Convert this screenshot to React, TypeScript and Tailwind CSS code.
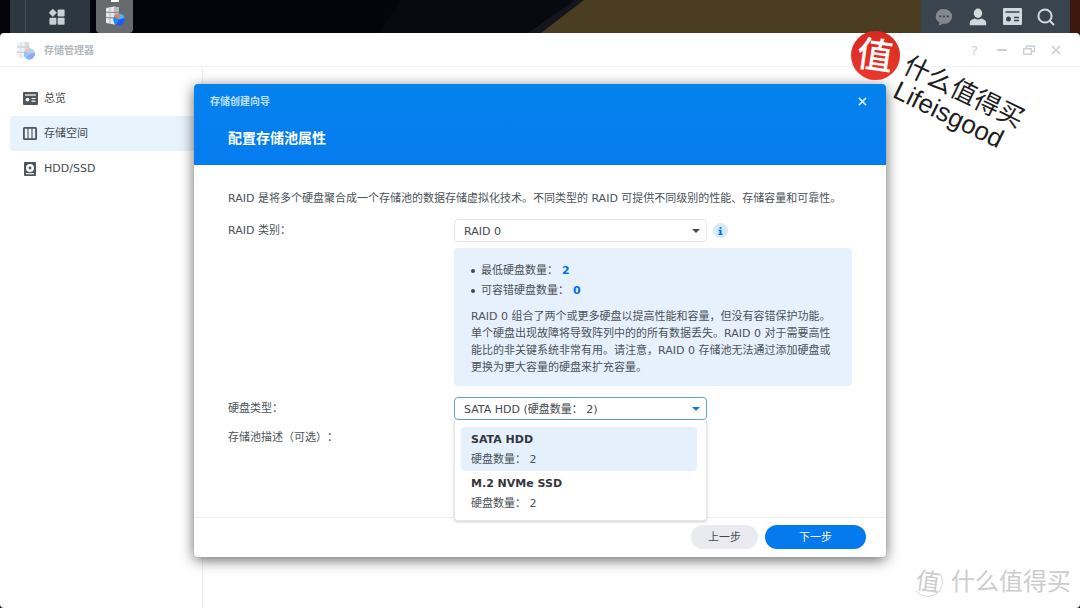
import { ReactElement, ReactNode, useState } from 'react'
import clsx from 'clsx'

interface INavItem {
  id: string
  label: string
  icon: ReactNode
}

interface IDriveType {
  id: string
  name: string
  count: number
}

const driveTypes: IDriveType[] = [
  { id: 'sata', name: 'SATA HDD', count: 2 },
  { id: 'nvme', name: 'M.2 NVMe SSD', count: 2 },
]

const StorageIcon = ({ className }: { className?: string }): ReactElement => (
  <svg viewBox="0 0 20 20" className={className} aria-hidden="true">
    <path d="M1 2l8-1.500 5 1v15.500l-5 1.500-8-1.500z" fill="#e6e8ea" />
    <path d="M9 .5l5 1v15.500l-5 1.500z" fill="#b9bdc1" />
    <path d="M1 6.200l8 .3 5-.3M1 11.600l8 .4 5-.4" fill="none" stroke="#7d8287" strokeWidth="1" />
    <path d="M5 1.500v16.500" stroke="#a5aaae" strokeWidth="0.800" />
    <circle cx="14" cy="13.600" r="5.800" fill="#1b8cff" />
    <path d="M14 13.600V7.800a5.800 5.800 0 0 1 5.600 4.200z" fill="#4fb4f5" />
    <path d="M14 13.600l-5-3a5.800 5.800 0 0 1 5-2.800z" fill="#ff7a3c" />
    <path d="M14 13.600l5.600-1.600a5.800 5.800 0 0 1-8.400 6.700z" fill="#2858e8" />
  </svg>
)

const OverviewIcon = (): ReactElement => (
  <svg viewBox="0 0 15 13" className="h-[13px] w-[15px]" aria-hidden="true">
    <rect width="15" height="13" rx="1" fill="currentColor" />
    <path d="M2 3h11" stroke="#fff" strokeWidth="1.200" />
    <circle cx="4.500" cy="7.600" r="1.900" fill="#fff" />
    <path d="M8.500 6.500h4M8.500 9.200h4" stroke="#fff" strokeWidth="1.200" />
  </svg>
)

// inverted version of OverviewIcon for the task bar
const WidgetIcon = (): ReactElement => (
  <svg viewBox="0 0 19 17" className="h-[17px] w-[19px]" aria-hidden="true">
    <rect width="19" height="17" rx="1" fill="#d3d8dc" />
    <path d="M2.500 4h14M11 9.400h5M11 12.600h5" stroke="#3a444e" strokeWidth="1.500" />
    <circle cx="5.500" cy="11" r="2.500" fill="#3a444e" />
  </svg>
)

const VolumeIcon = (): ReactElement => (
  <svg viewBox="0 0 14 13" className="h-[13px] w-[14px]" aria-hidden="true">
    <rect x="0.900" y="0.900" width="12.200" height="11.200" rx="0.600" fill="none" stroke="currentColor" strokeWidth="1.800" />
    <path d="M5 1v11M9 1v11" stroke="currentColor" strokeWidth="1.100" />
  </svg>
)

const DiskIcon = (): ReactElement => (
  <svg viewBox="0 0 12 14" className="h-[14px] w-[12px]" aria-hidden="true">
    <rect width="12" height="14" rx="1" fill="currentColor" />
    <circle cx="6" cy="6" r="4" fill="#fff" />
    <circle cx="6" cy="6" r="1.400" fill="currentColor" />
    <path d="M2 11.700h8" stroke="#fff" strokeWidth="1.100" />
  </svg>
)

const CloseIcon = ({ className }: { className?: string }): ReactElement => (
  <svg viewBox="0 0 10 10" className={className} aria-hidden="true">
    <path d="M1 1l8 8M9 1L1 9" fill="none" stroke="currentColor" strokeWidth="1.700" />
  </svg>
)

const navItems: INavItem[] = [
  { id: 'overview', label: '总览', icon: <OverviewIcon /> },
  { id: 'storage', label: '存储空间', icon: <VolumeIcon /> },
  { id: 'hdd', label: 'HDD/SSD', icon: <DiskIcon /> },
]

const TaskBar = (): ReactElement => (
  <header className="relative flex h-[33px] items-stretch bg-[#04050a]">
    <svg
      viewBox="0 0 1080 33"
      preserveAspectRatio="none"
      className="absolute inset-0 h-full w-full"
      aria-hidden="true"
    >
      <path d="M400 0h184l-42 33H380z" fill="#08090e" />
      <path d="M575 0h12l-42 33h-17z" fill="#15161d" />
      <path d="M584 0h496v33H541z" fill="#4a3d22" />
      <path d="M1068 0h12v33h-12z" fill="#3c180d" />
    </svg>
    <div className="relative flex w-full items-stretch px-[10px]">
      <button className="flex w-20 items-stretch bg-[#2c3740]" aria-label="主菜单">
        <span className="w-4 border-r border-[#46515a]" />
        <span className="flex grow items-center justify-center pr-0.5">
          <svg viewBox="0 0 16 16" className="h-4 w-4" fill="#c9d0d5">
            <path d="M3.800 0l3.800 3.800-3.800 3.800L0 3.800z" stroke="#c9d0d5" strokeWidth="0.600" />
            <rect x="8.600" y="0.400" width="7" height="7" rx="1" />
            <rect x="0.400" y="8.800" width="7" height="7" rx="1" />
            <rect x="8.600" y="8.800" width="7" height="7" rx="1" />
          </svg>
        </span>
      </button>
      <button
        className="ml-1.5 flex w-[37px] flex-col items-center rounded-b-sm bg-[#676b6e]"
        aria-label="存储管理器"
      >
        <span className="h-0.5 w-2 bg-white" />
        <StorageIcon className="mt-1 h-5 w-5" />
      </button>
      <div className="ml-auto flex items-center bg-[#3a444e] pr-[7px] pl-1.5">
        <button className="flex w-[34px] justify-center" aria-label="聊天">
          <svg viewBox="0 0 18 18" className="h-[18px] w-[18px]">
            <path d="M9 1a8.200 7.400 0 0 1 0 14.800c-.6 0-1 0-1.600-.1-1 1-2.400 1.500-3.800 1.500.6-.8.8-1.600.7-2.600A7.400 7.400 0 0 1 9 1z" fill="#82888e" />
            <path d="M4.200 8.400h2M8 8.400h2M11.800 8.400h2" stroke="#3a444e" strokeWidth="1.800" />
          </svg>
        </button>
        <button className="flex w-[34px] justify-center" aria-label="用户">
          <svg viewBox="0 0 18 18" className="h-[18px] w-[18px]" fill="#d3d8dc">
            <ellipse cx="9" cy="5.200" rx="4.200" ry="4.700" />
            <path d="M.8 17.200v-2.400c0-2 2.200-3.600 5-4.200 2 1.200 4.400 1.200 6.400 0 2.800.6 5 2.200 5 4.200v2.400z" />
          </svg>
        </button>
        <button className="flex w-[34px] justify-center" aria-label="小工具">
          <WidgetIcon />
        </button>
        <button className="flex w-[34px] justify-center" aria-label="搜索">
          <svg viewBox="0 0 18 18" className="h-[18px] w-[18px]" fill="none" stroke="#d3d8dc" strokeWidth="2">
            <circle cx="8" cy="8" r="6.600" />
            <path d="M12.700 12.700l4.300 4.300" />
          </svg>
        </button>
      </div>
    </div>
  </header>
)

const WindowTitle = (): ReactElement => (
  <div className="flex h-[34px] items-center border-b border-[#eff1f5] pt-px pr-[11px] pl-4">
    <StorageIcon className="h-[19px] w-[19px] opacity-50" />
    <h1 className="ml-[9px] text-[10px] font-bold text-[#b4b8bb]">存储管理器</h1>
    <div className="ml-auto flex items-center text-[#cccfd2]">
      <button className="flex w-[27px] justify-center text-[13px]" aria-label="帮助">
        ?
      </button>
      <button className="flex w-[27px] justify-center" aria-label="最小化">
        <span className="h-0.5 w-[10px] bg-current" />
      </button>
      <button className="flex w-[27px] justify-center" aria-label="还原">
        <svg viewBox="0 0 12 10" className="h-[10px] w-3" fill="none" stroke="currentColor">
          <path d="M3.500 3V1h7.800v5.500H9" strokeWidth="1.400" />
          <rect x="0.700" y="3.700" width="7.600" height="5.500" strokeWidth="1.400" />
        </svg>
      </button>
      <button className="flex w-[27px] justify-center" aria-label="关闭">
        <CloseIcon className="h-[10px] w-[10px]" />
      </button>
    </div>
  </div>
)

const Sidebar = (): ReactElement => {
  const [active, setActive] = useState('storage')

  return (
    <nav className="w-[203px] shrink-0 border-r border-[#eceef1] pt-[14px] pl-[10px]">
      <ul>
        {navItems.map((item) => (
          <li key={item.id}>
            <button
              onClick={() => setActive(item.id)}
              className={clsx(
                'flex h-[35px] w-full items-center gap-1.5 rounded-l pl-3 text-[#44494d]',
                item.id === active && 'bg-[#e6f2fc]'
              )}
            >
              <span className="flex w-4 justify-center text-[#50555a]">
                {item.icon}
              </span>
              {item.label}
            </button>
          </li>
        ))}
      </ul>
    </nav>
  )
}

const Caret = (): ReactElement => (
  <svg viewBox="0 0 8 4" className="pointer-events-none absolute top-[10px] right-[7px] h-1 w-2" aria-hidden="true">
    <path d="M0 0h8L4 4z" fill="currentColor" />
  </svg>
)

const RaidInfo = (): ReactElement => (
  <div className="col-start-2 mb-[5px] rounded-sm bg-[#e7f1fe] px-[17px] pt-[13px] pb-[10px]">
    <ul className="leading-5">
      <li className="flex items-center">
        <span className="mr-1.5 h-1 w-1 rounded-full bg-[#3c4a58]" />
        最低硬盘数量：
        <strong className="ml-1 text-[#0571e6]">2</strong>
      </li>
      <li className="flex items-center">
        <span className="mr-1.5 h-1 w-1 rounded-full bg-[#3c4a58]" />
        可容错硬盘数量：
        <strong className="ml-1 text-[#0571e6]">0</strong>
      </li>
    </ul>
    <p className="mt-[7px]">
      RAID 0 组合了两个或更多硬盘以提高性能和容量，但没有容错保护功能。单个硬盘出现故障将导致阵列中的的所有数据丢失。RAID
      0 对于需要高性能比的非关键系统非常有用。请注意，RAID 0
      存储池无法通过添加硬盘或更换为更大容量的硬盘来扩充容量。
    </p>
  </div>
)

const Wizard = (): ReactElement => {
  const [driveType, setDriveType] = useState('sata')

  return (
    <section
      role="dialog"
      aria-labelledby="wizard-title"
      className="w-full max-w-[692px] rounded-sm bg-white shadow-[0_3px_14px_rgba(0,0,0,0.6)]"
    >
      <header className="rounded-t-sm bg-linear-to-b from-[#0582ec] to-[#057cf0] pb-[17px]">
        <div className="flex h-[34px] items-center justify-between pr-[19px] pl-4">
          <span className="text-[10px] font-bold text-[#bfe0ff]">
            存储创建向导
          </span>
          <button aria-label="关闭" className="text-[#d9ecff]">
            <CloseIcon className="h-[9px] w-[9px]" />
          </button>
        </div>
        <h2
          id="wizard-title"
          className="mt-[10px] px-[34px] text-sm leading-5 font-bold text-white"
        >
          配置存储池属性
        </h2>
      </header>

      <div className="px-[34px] pt-[25px] pb-[7px]">
        <p>
          RAID 是将多个硬盘聚合成一个存储池的数据存储虚拟化技术。不同类型的 RAID
          可提供不同级别的性能、存储容量和可靠性。
        </p>
        <div className="mt-3 grid grid-cols-[226px_1fr] gap-y-1.5">
          <label htmlFor="raid-type" className="pt-px leading-[22px]">
            RAID 类别：
          </label>
          <div className="flex items-center">
            <div className="relative w-[253px] text-[#44494d]">
              <select
                id="raid-type"
                className="block h-[23px] w-full appearance-none rounded-sm border border-[#e3e7ea] bg-white pt-px pl-[9px]"
              >
                <option>RAID 0</option>
              </select>
              <Caret />
            </div>
            <button
              aria-label="说明"
              className="ml-1.5 flex h-[15px] w-[15px] items-center justify-center rounded-full bg-[#d5eafb] text-[#0571e6]"
            >
              <svg viewBox="0 0 5 8" className="h-2 w-[5px]" fill="currentColor">
                <path d="M1.500 0h2v1.700h-2zM.5 2.700h3v4h1V8h-4V6.700h1V4h-1z" />
              </svg>
            </button>
          </div>

          <RaidInfo />

          <label htmlFor="drive-type" className="pt-px leading-[22px]">
            硬盘类型：
          </label>
          <div className="relative w-[253px] text-[#1673d8]">
            <select
              id="drive-type"
              value={driveType}
              onChange={(e) => setDriveType(e.target.value)}
              className="block h-[23px] w-full appearance-none rounded-sm border border-[#62a5c9] bg-white pt-px pl-[9px] text-[#44494d]"
            >
              {driveTypes.map((type) => (
                <option key={type.id} value={type.id}>
                  {`${type.name} (硬盘数量： ${type.count})`}
                </option>
              ))}
            </select>
            <Caret />
            <ul className="absolute top-full left-0 z-10 w-full rounded-b-sm border border-t-0 border-[#e4e6e9] bg-white pt-[7px] pr-[9px] pb-[5px] pl-1.5 shadow-[0_1px_3px_rgba(0,0,0,0.2)]">
              {driveTypes.map((type) => (
                <li key={type.id}>
                  <button
                    onClick={() => setDriveType(type.id)}
                    className={clsx(
                      'block w-full rounded-sm pt-[3px] pb-px pl-[10px] text-left leading-5 text-[#4b5258]',
                      type.id === driveType && 'bg-[#e4f1fd]'
                    )}
                  >
                    <strong className="block text-[#32373c]">{type.name}</strong>
                    <span className="block">硬盘数量： {type.count}</span>
                  </button>
                </li>
              ))}
            </ul>
          </div>

          <label htmlFor="pool-description" className="pt-px leading-[22px]">
            存储池描述（可选）：
          </label>
          <textarea
            id="pool-description"
            className="h-[84px] w-[253px] resize-none rounded-sm border border-[#e3e7ea]"
          />
        </div>
      </div>

      <footer className="flex justify-end gap-[7px] border-t border-[#eef0f3] pt-[7px] pr-5 pb-2">
        <button className="h-6 w-[67px] rounded-full bg-[#e9ebf0] text-[#44494d]">
          上一步
        </button>
        <button className="h-6 w-[101px] rounded-full bg-[#057aee] text-white">
          下一步
        </button>
      </footer>
    </section>
  )
}

const TiltedLogo = (): ReactElement => (
  <div className="pointer-events-none absolute top-[31px] right-14 h-[120px] w-[173px]">
    <div className="absolute top-0 left-0 flex h-[49px] w-[49px] items-center justify-center rounded-full bg-linear-to-b from-[#d8281f] to-[#ea382c]">
      <span className="rotate-[8deg] text-[36px] leading-none font-medium text-white">
        值
      </span>
    </div>
    <div className="absolute top-[46px] left-[42px] w-[132px] rotate-[26deg] whitespace-nowrap text-[#1e1e1e]">
      <div className="text-[26px] leading-[28px]">什么值得买</div>
      <div className="pl-0.5 font-['Liberation_Sans',sans-serif] text-[26px] leading-[26px]">
        Lifeisgood
      </div>
    </div>
  </div>
)

const CornerLogo = (): ReactElement => (
  <div className="pointer-events-none absolute right-[9px] bottom-2 flex items-center text-[#cdcdcd]">
    <span className="flex h-[30px] w-[30px] rotate-[8deg] items-center justify-center rounded-full border border-[#d8d8d8] border-t-transparent border-l-transparent text-2xl leading-none">
      值
    </span>
    <span className="ml-2 text-2xl leading-9">什么值得买</span>
  </div>
)

export default function App(): ReactElement {
  return (
    <div className="relative flex min-h-screen flex-col overflow-hidden bg-black font-['DejaVu_Sans','Noto_Sans_CJK_SC',sans-serif] text-[11px] leading-[17px] text-[#4b5258] [text-spacing-trim:space-all]">
      <TaskBar />
      <main className="relative flex grow flex-col rounded-sm bg-white">
        <WindowTitle />
        <div className="flex grow">
          <Sidebar />
        </div>
        <div className="absolute inset-0 flex items-center justify-center">
          <Wizard />
        </div>
      </main>
      <TiltedLogo />
      <CornerLogo />
    </div>
  )
}
